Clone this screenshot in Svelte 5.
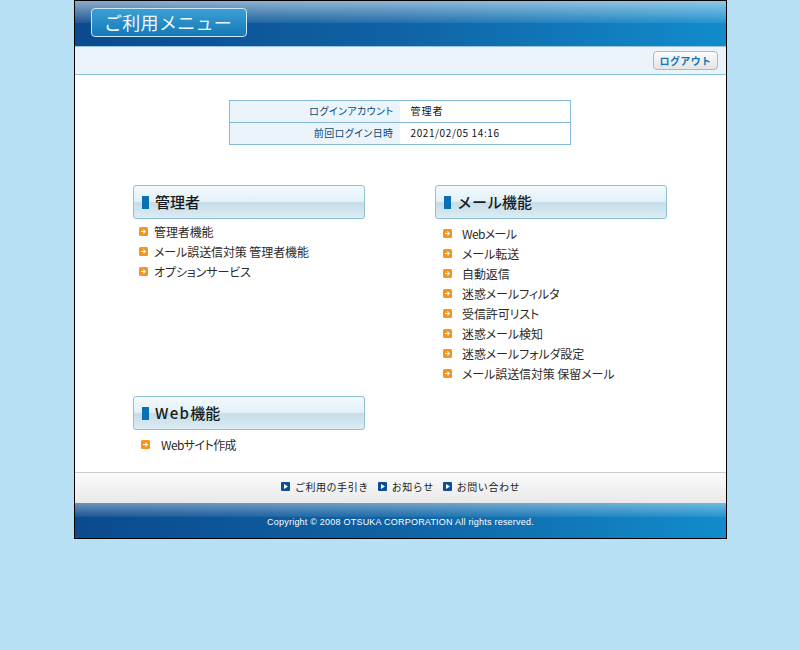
<script>
    const cjk = ['管理者機能', 'メール誤送信対策 管理者機能', 'オプションサービス']
    const mail = ['Webメール', 'メール転送', '自動返信', '迷惑メールフィルタ', '受信許可リスト', '迷惑メール検知', '迷惑メールフォルダ設定', 'メール誤送信対策 保留メール']
    const links = ['ご利用の手引き', 'お知らせ', 'お問い合わせ']
</script>

{#snippet arrow()}
    <svg class="arrow" width="9" height="9" viewBox="0 0 9 9">
        <rect width="9" height="9" rx="1.5" fill="#f7941e" />
        <path d="M2 4.5H6.3M4.4 2.6l1.9 1.9-1.9 1.9" fill="none" stroke="#fff" stroke-width="1.1" />
    </svg>
{/snippet}

<div class="page">
    <header class="top">
        <h1 class="title">ご利用メニュー</h1>
    </header>
    <div class="subbar">
        <button class="logout">ログアウト</button>
    </div>

    <main class="content">
        <table class="info">
            <tbody>
                <tr><th>ログインアカウント</th><td class="name">管理者</td></tr>
                <tr><th>前回ログイン日時</th><td class="date">2021/02/05 14:16</td></tr>
            </tbody>
        </table>

        <div class="menus">
            <section class="admin">
                <h2 class="head"><i></i>管理者</h2>
                <ul class="list">
                    {#each cjk as item}
                        <li>{@render arrow()}<span>{item}</span></li>
                    {/each}
                </ul>
            </section>
            <section class="mail">
                <h2 class="head"><i></i>メール機能</h2>
                <ul class="list">
                    {#each mail as item}
                        <li>{@render arrow()}<span class:tight={item.startsWith('Web')}>{item}</span></li>
                    {/each}
                </ul>
            </section>
            <section class="web">
                <h2 class="head"><i></i><span class="latin">Web</span>機能</h2>
                <ul class="list">
                    <li>{@render arrow()}<span class="tight">Webサイト作成</span></li>
                </ul>
            </section>
        </div>
    </main>

    <nav class="links">
        {#each links as link}
            <span class="link">
                <svg width="9" height="9" viewBox="0 0 9 9">
                    <rect width="9" height="9" rx="1" fill="#0e4f94" />
                    <path d="M3 2l4 2.5L3 7z" fill="#fff" />
                </svg>
                {link}
            </span>
        {/each}
    </nav>
    <footer class="copy">Copyright © 2008 OTSUKA CORPORATION All rights reserved.</footer>
</div>

<style>
    :global(body) {
        background: #b7e0f4;
        font-family: "Noto Sans CJK JP", "Liberation Sans", sans-serif;
    }

    .page {
        box-sizing: border-box;
        width: 653px;
        margin-left: 74px;
        background: #fff;
        border: 1px solid #000;
    }

    .top {
        height: 46px;
        padding: 7px 0 0 16px;
        box-sizing: border-box;
        background:
            linear-gradient(#ffffff88, #ffffff11 50%, #0000 50%),
            linear-gradient(90deg, #0b4a8e, #0f63a5 50%, #128ccc);
        border-bottom: 1px solid #9cc3e0;
    }

    .title {
        box-sizing: border-box;
        width: 156px;
        height: 29px;
        margin: 0;
        padding-left: 12px;
        border: 1px solid #cfe8f5;
        border-radius: 4px;
        background: linear-gradient(#3aa0d4, #1479b8);
        color: #eef7fc;
        font-size: 18px;
        font-weight: 400;
        line-height: 26px;
        letter-spacing: .3px;
    }

    .subbar {
        display: flex;
        justify-content: flex-end;
        height: 28px;
        padding: 4px 8px 0 0;
        box-sizing: border-box;
        background: #ebf4fb;
        border-bottom: 1px solid #86c2dc;
    }

    .logout {
        width: 65px;
        height: 19px;
        padding: 0;
        border: 1px solid #b5b5b5;
        border-radius: 4px;
        background: linear-gradient(#fbfbfb, #e4e4e4);
        color: #0e78b8;
        font: 700 10px "Noto Sans CJK JP", sans-serif;
        letter-spacing: .4px;
    }

    .content {
        height: 397px;
        padding-top: 25px;
        box-sizing: border-box;
    }

    .info {
        width: 342px;
        margin: 0 0 40px 154px;
        table-layout: fixed;
        border-collapse: collapse;
        border: 1px solid #86b9d8;
        font-size: 10px;
        font-feature-settings: "palt";
    }

    .info tr + tr {
        border-top: 1px solid #86b9d8;
    }

    .info th {
        width: 170px;
        height: 22px;
        box-sizing: border-box;
        padding: 0 6px 2px 0;
        background: #ebf4fb;
        color: #0c4a7c;
        font-weight: 400;
        text-align: right;
        letter-spacing: .4px;
    }

    .info td {
        padding: 0 0 2px 11px;
        color: #111;
    }

    .info .name {
        letter-spacing: 1px;
    }

    .info .date {
        letter-spacing: .6px;
    }

    .menus {
        display: grid;
        grid-template-columns: 232px 232px;
        grid-template-rows: 211px auto;
        column-gap: 70px;
        padding-left: 58px;
    }

    .mail {
        grid-row: 1 / 3;
        grid-column: 2;
    }

    .web {
        grid-column: 1;
        grid-row: 2;
    }

    .head {
        display: flex;
        align-items: center;
        box-sizing: border-box;
        height: 34px;
        margin: 0;
        padding: 0 0 2px 8px;
        border: 1px solid #8fc0d6;
        border-radius: 3px;
        background: linear-gradient(#f2fafd, #e2f1f8 48%, #c5dde9 52%, #dcecf4);
        color: #1a1a1a;
        font-size: 15px;
        font-weight: 500;
        line-height: 1;
    }

    .head i {
        width: 7px;
        height: 13px;
        margin: 2px 6px 0 0;
        background: #0a70b4;
    }

    .latin {
        letter-spacing: 1.3px;
    }

    .list {
        margin: 0;
        padding: 2px 0 0 6px;
        list-style: none;
        font-size: 12px;
        color: #2b2b2b;
        font-feature-settings: "palt";
        letter-spacing: -.1px;
    }

    .list li {
        display: flex;
        align-items: center;
        height: 20px;
    }

    .list .tight {
        letter-spacing: -.6px;
    }

    .arrow {
        margin-right: 6px;
        margin-top: 1px;
    }

    .mail .list {
        padding: 4px 0 0 8px;
    }

    .mail .arrow {
        margin-right: 10px;
    }

    .web .list {
        padding: 4px 0 0 8px;
    }

    .web .arrow {
        margin-right: 11px;
    }

    .links {
        display: flex;
        justify-content: center;
        align-items: center;
        gap: 9px;
        height: 31px;
        padding-bottom: 4px;
        box-sizing: border-box;
        border-top: 1px solid #ccc;
        background: linear-gradient(#fbfbfb, #e9e9e9);
        font-size: 10px;
        letter-spacing: .55px;
        color: #222;
    }

    .link {
        display: flex;
        align-items: center;
        gap: 5px;
    }

    .link svg {
        margin-top: 1px;
    }

    .copy {
        height: 35px;
        box-sizing: border-box;
        padding-top: 14px;
        text-align: center;
        color: #fff;
        font: 9px "Liberation Sans", sans-serif;
        letter-spacing: .22px;
        background:
            linear-gradient(#ffffff66, #ffffff11 40%, #0000 40%),
            linear-gradient(90deg, #0b4a8e, #0f63a5 50%, #128ccc);
    }
</style>
